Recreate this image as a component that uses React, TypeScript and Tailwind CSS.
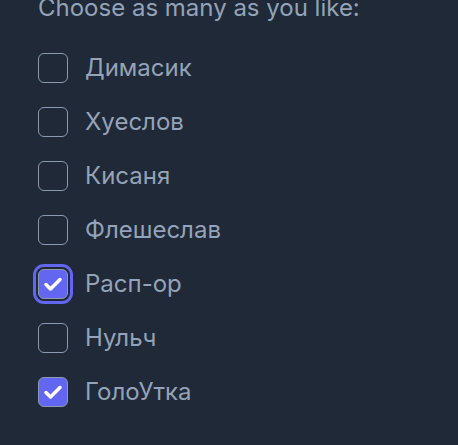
import React, { useState } from 'react';

const OPTIONS = ['Димасик', 'Хуеслов', 'Кисаня', 'Флешеслав', 'Расп-ор', 'Нульч', 'ГолоУтка'];

export default function App() {
  const [checked, setChecked] = useState<Record<string, boolean>>({ 'Расп-ор': true, 'ГолоУтка': true });
  const focused = 'Расп-ор';

  return (
    <div className="min-h-screen w-full bg-[#1f2937] overflow-hidden" style={{ fontFamily: 'Inter, "Noto Sans", sans-serif' }}>
      <div className="pl-[38px] -mt-[8px]">
        <p className="text-2xl leading-8 text-[#94a3b8]">Choose as many as you like:</p>
        <div className="mt-[29px] flex flex-col gap-6">
          {OPTIONS.map((name) => {
            const on = !!checked[name];
            return (
              <label key={name} className="flex items-center h-[30px] cursor-pointer">
                <span
                  className={`flex shrink-0 items-center justify-center w-[30px] h-[30px] rounded-md border-[1.5px] border-[#8b9ab0] ${
                    on ? 'bg-[#6366f1]' : 'bg-transparent'
                  } ${name === focused ? 'ring-[3px] ring-[#6366f1] ring-offset-2 ring-offset-[#1f2937]' : ''}`}
                  onClick={() => setChecked((c) => ({ ...c, [name]: !c[name] }))}
                >
                  {on && (
                    <svg width="22" height="22" viewBox="0 0 22 22" fill="none">
                      <path d="M4 11.5l4.5 4.5 9.5-9.5" stroke="white" strokeWidth="3.5" strokeLinecap="round" strokeLinejoin="round" />
                    </svg>
                  )}
                </span>
                <span className="ml-[17px] text-2xl text-[#94a3b8]">{name}</span>
              </label>
            );
          })}
        </div>
      </div>
    </div>
  );
}
